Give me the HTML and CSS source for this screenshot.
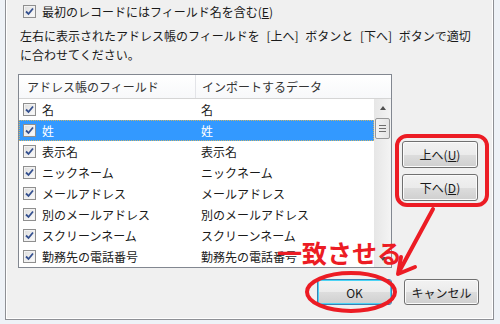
FILE: index.html
```html
<!DOCTYPE html>
<html lang="ja">
<head>
    <meta charset="UTF-8">
    <title>アドレス帳のインポート</title>
    <link rel="stylesheet" href="styles.css">
</head>
<body>
<div class="screen">
    <div class="dialog">
        <label class="option">
            <span class="check"><svg viewBox="0 0 11 11"><path d="M2 5.5 L4.5 8 L9 2.5"/></svg></span>
            <span>最初のレコードにはフィールド名を含む(<u>E</u>)</span>
        </label>

        <p class="intro">左右に表示されたアドレス帳のフィールドを [上へ] ボタンと [下へ] ボタンで適切<br>に合わせてください。</p>

        <div class="content">
            <div class="listbox">
                <div class="list-head">
                    <div class="col-a">アドレス帳のフィールド</div>
                    <div class="col-b">インポートするデータ</div>
                </div>
                <div class="list-body">
                    <div class="rows">
                        <div class="row">
                            <span class="cell-a"><span class="check"><svg viewBox="0 0 11 11"><path d="M2 5.5 L4.5 8 L9 2.5"/></svg></span>名</span>
                            <span class="cell-b">名</span>
                        </div>
                        <div class="row selected">
                            <span class="cell-a"><span class="check"><svg viewBox="0 0 11 11"><path d="M2 5.5 L4.5 8 L9 2.5"/></svg></span>姓</span>
                            <span class="cell-b">姓</span>
                        </div>
                        <div class="row">
                            <span class="cell-a"><span class="check"><svg viewBox="0 0 11 11"><path d="M2 5.5 L4.5 8 L9 2.5"/></svg></span>表示名</span>
                            <span class="cell-b">表示名</span>
                        </div>
                        <div class="row">
                            <span class="cell-a"><span class="check"><svg viewBox="0 0 11 11"><path d="M2 5.5 L4.5 8 L9 2.5"/></svg></span>ニックネーム</span>
                            <span class="cell-b">ニックネーム</span>
                        </div>
                        <div class="row">
                            <span class="cell-a"><span class="check"><svg viewBox="0 0 11 11"><path d="M2 5.5 L4.5 8 L9 2.5"/></svg></span>メールアドレス</span>
                            <span class="cell-b">メールアドレス</span>
                        </div>
                        <div class="row">
                            <span class="cell-a"><span class="check"><svg viewBox="0 0 11 11"><path d="M2 5.5 L4.5 8 L9 2.5"/></svg></span>別のメールアドレス</span>
                            <span class="cell-b">別のメールアドレス</span>
                        </div>
                        <div class="row">
                            <span class="cell-a"><span class="check"><svg viewBox="0 0 11 11"><path d="M2 5.5 L4.5 8 L9 2.5"/></svg></span>スクリーンネーム</span>
                            <span class="cell-b">スクリーンネーム</span>
                        </div>
                        <div class="row">
                            <span class="cell-a"><span class="check"><svg viewBox="0 0 11 11"><path d="M2 5.5 L4.5 8 L9 2.5"/></svg></span>勤務先の電話番号</span>
                            <span class="cell-b">勤務先の電話番号</span>
                        </div>
                    </div>
                    <div class="scrollbar">
                        <span class="arrow"><span class="tri-up"></span></span>
                        <span class="thumb"><i></i><i></i><i></i></span>
                        <span class="track"></span>
                        <span class="arrow"><span class="tri-down"></span></span>
                    </div>
                </div>
            </div>

            <div class="side">
                <button class="btn">上へ(<u>U</u>)</button>
                <button class="btn">下へ(<u>D</u>)</button>
            </div>
        </div>

        <div class="footer">
            <button class="btn btn-default">OK</button>
            <button class="btn">キャンセル</button>
        </div>
    </div>

    <!-- red annotations drawn over the dialog -->
    <svg class="marks" width="500" height="324" viewBox="0 0 500 324">
        <rect x="397" y="136" width="90" height="69" rx="10" ry="10"/>
        <ellipse cx="351" cy="292" rx="44" ry="19"/>
        <line x1="433" y1="209" x2="400" y2="270"/>
        <polyline points="401,257 398,274 415,267"/>
    </svg>
    <span class="note">一致させる</span>
</div>
</body>
</html>
```

FILE: styles.css
```css
body {
    margin: 0;
    font-family: "Noto Sans CJK JP", "Noto Sans", sans-serif;
    font-size: 12px;
    color: #1a1a1a;
}

.screen {
    position: relative;
    width: 500px;
    height: 324px;
    overflow: hidden;
    background-color: #eef2f7;
}

.dialog {
    box-sizing: border-box;
    width: 489px;
    height: 320px;
    margin-left: 5px;
    background-color: #f0f0f0;
    border: 1px solid #8e9095;
    border-top: none;
    box-shadow: inset 1px 0 0 #ffffff, inset -1px -1px 0 #ffffff;
}

/* top checkbox */
.option {
    display: flex;
    align-items: center;
    gap: 6px;
    height: 13px;
    line-height: 13px;
    padding: 5px 0 0 17px;
}

.check {
    box-sizing: border-box;
    display: inline-block;
    flex: none;
    width: 13px;
    height: 13px;
    border: 1px solid #8f8f8f;
    background: linear-gradient(135deg, #dcdcdc, #fdfdfd);
    box-shadow: inset 0 0 0 1px #f2f2f2;
}

.check svg {
    display: block;
    width: 11px;
    height: 11px;
}

.check path {
    fill: none;
    stroke: #34508f;
    stroke-width: 1.8;
}

.intro {
    margin: 8px 0 0 14px;
    line-height: 19px;
    word-spacing: 4px;
}

/* list + up/down */
.content {
    display: flex;
    margin-top: 10px;
    padding-left: 12px;
}

.listbox {
    box-sizing: border-box;
    width: 374px;
    height: 194px;
    border: 1px solid #828790;
    background-color: white;
}

.list-head {
    display: flex;
    height: 23px;
    line-height: 23px;
    border-bottom: 1px solid #d5d5d5;
    background: linear-gradient(#ffffff, #f7f8fa);
    color: #333;
}

.list-head .col-a {
    box-sizing: border-box;
    width: 177px;
    padding-left: 8px;
    border-right: 1px solid #e3e4e8;
}

.list-head .col-b {
    padding-left: 6px;
}

.list-body {
    display: flex;
    height: 168px;
}

.rows {
    width: 355px;
}

.row {
    box-sizing: border-box;
    display: flex;
    height: 21px;
    align-items: center;
}

.row.selected {
    background-color: #3399ff;
    color: white;
    border: 1px dotted #c9b46a;
}

.cell-a {
    box-sizing: border-box;
    display: flex;
    align-items: center;
    gap: 6px;
    width: 178px;
    padding-left: 4px;
}

.row.selected .cell-a {
    padding-left: 3px;
    width: 177px;
}

.cell-b {
    padding-left: 4px;
}

.scrollbar {
    display: flex;
    flex-direction: column;
    width: 17px;
    background: linear-gradient(to right, #e6e6e6, #f4f4f4);
}

.arrow {
    display: flex;
    height: 17px;
    align-items: center;
    justify-content: center;
}

.tri-up {
    border-left: 3px solid transparent;
    border-right: 3px solid transparent;
    border-bottom: 4px solid #505050;
}

.tri-down {
    border-left: 3px solid transparent;
    border-right: 3px solid transparent;
    border-top: 4px solid #505050;
}

.thumb {
    box-sizing: border-box;
    display: flex;
    flex-direction: column;
    align-items: center;
    justify-content: center;
    gap: 2px;
    height: 21px;
    margin: 2px 1px 0 1px;
    border: 1px solid #979797;
    border-radius: 2px;
    background: linear-gradient(to right, #f3f3f3, #e4e4e4);
}

.thumb i {
    display: block;
    width: 7px;
    height: 1px;
    background-color: #6e6e6e;
}

.track {
    flex: 1;
}

.side {
    display: flex;
    flex-direction: column;
    gap: 6px;
    margin-left: 10px;
    padding-top: 67px;
}

/* buttons */
.btn {
    box-sizing: border-box;
    width: 76px;
    height: 27px;
    padding: 0;
    font-family: inherit;
    font-size: 12px;
    color: #1a1a1a;
    border: 1px solid #707070;
    border-radius: 3px;
    background: linear-gradient(#f2f2f2 0%, #ebebeb 50%, #dddddd 51%, #cfcfcf 100%);
    box-shadow: inset 0 0 0 1px #fbfbfb;
}

.btn-default {
    border-color: #3c7fb1;
    box-shadow: inset 0 0 0 1px #4bd3f5;
}

.footer {
    display: flex;
    justify-content: flex-end;
    gap: 12px;
    margin-top: 11px;
    padding-right: 14px;
}

.footer .btn {
    width: 75px;
    height: 26px;
}

/* annotations */
.marks {
    position: absolute;
    top: 0;
    left: 0;
    fill: none;
    stroke: #ec1c24;
    stroke-width: 4;
    stroke-linecap: round;
    stroke-linejoin: round;
}

.note {
    position: absolute;
    left: 277px;
    top: 240px;
    font-size: 25px;
    line-height: 25px;
    font-weight: bold;
    color: #ec1c24;
}
```
